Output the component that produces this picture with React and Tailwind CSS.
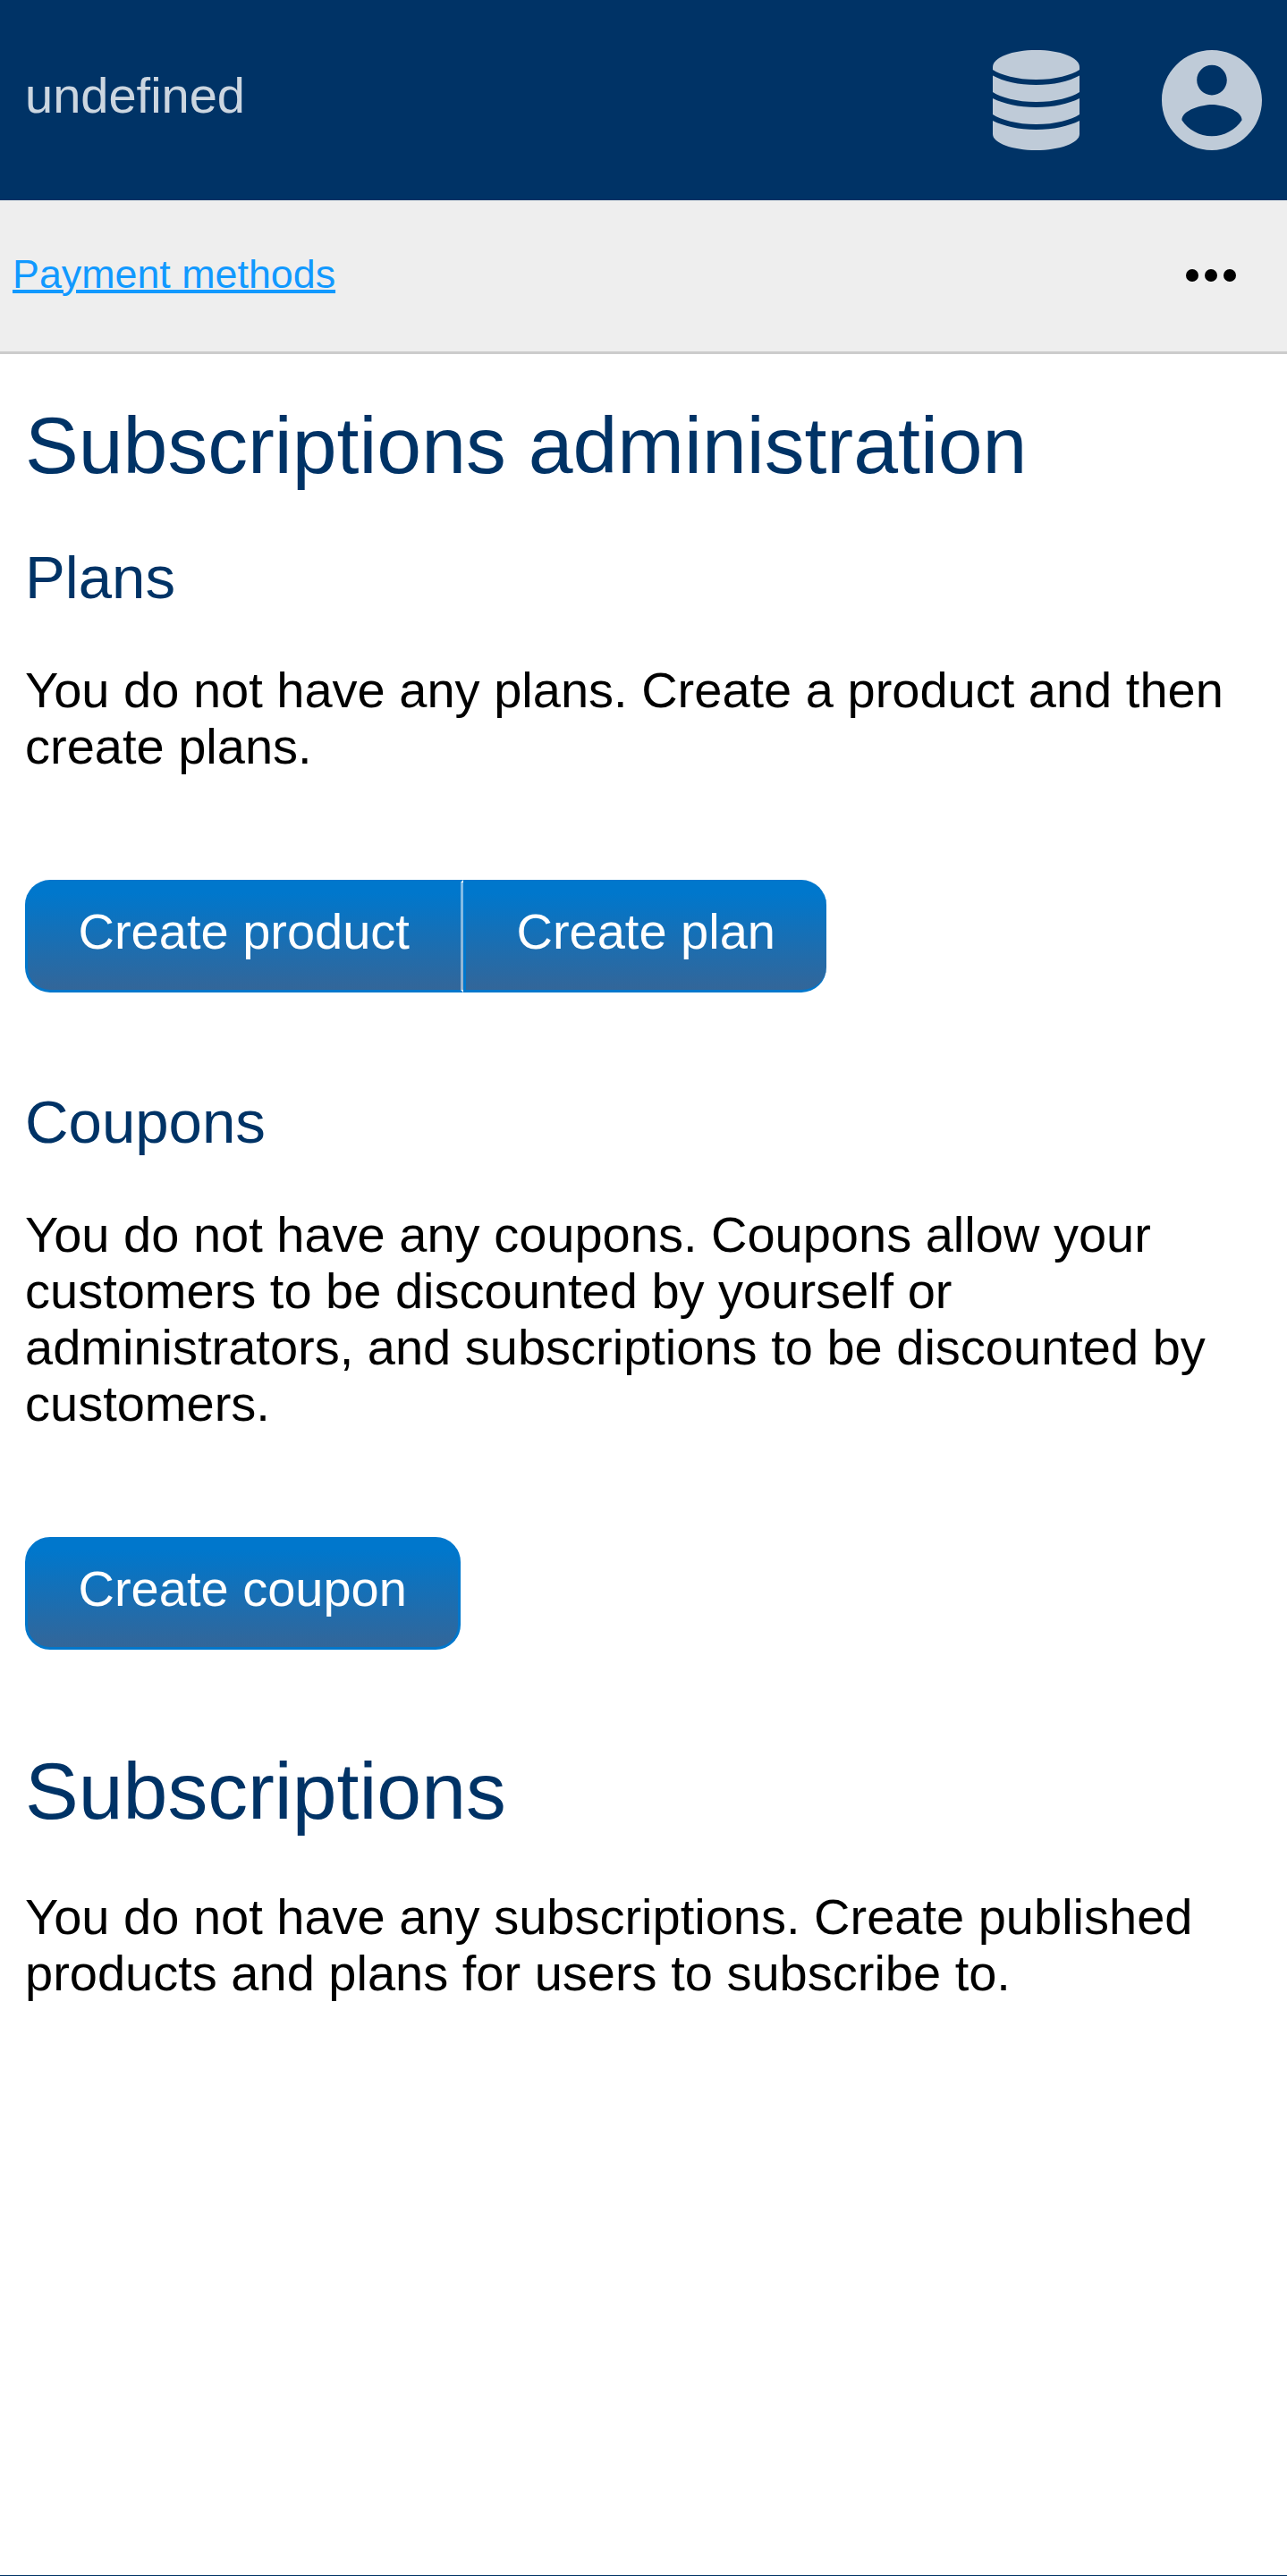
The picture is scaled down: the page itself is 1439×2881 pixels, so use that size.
const P = ({ children, className = "" }) => (
  <p className={"text-[56px] leading-[63px] text-black " + className}>{children}</p>
);

const BTN =
  "box-border h-[126px] border-[3px] border-[#0077cc] bg-linear-to-b/srgb from-[#0077cc] from-10% to-[#336699] pl-[56.5px] pt-[23.5px] pb-[33.5px] text-[56px] leading-[63px] text-white whitespace-nowrap";

export default function App() {
  return (
    <div className="flex h-[2881px] w-[1439px] flex-col overflow-hidden bg-white font-['Liberation_Sans',Arial,sans-serif]">
      <header className="flex h-[224px] shrink-0 items-center justify-between bg-[#003366] pl-7 pr-[28.5px]">
        <span className="pb-[11px] text-[56px] leading-[63px] text-white/80">undefined</span>
        <div className="flex items-center gap-[91.5px]">
          <svg viewBox="0 0 97 112" className="h-[112px] w-[97px] fill-white/75">
            <path d="M0 19C0 8 22 0 48.500 0S97 8 97 19V22C88 28 70 33 48.500 33S9 28 0 22Z" />
            <path d="M0 28.500C12 35 29 39 48.500 39S85 35 97 28.500V47C88 53 70 58 48.500 58S9 53 0 47Z" />
            <path d="M0 54C12 60 29 64 48.500 64S85 60 97 54V72C88 78 70 83 48.500 83S9 78 0 72Z" />
            <path d="M0 79C12 85 29 89 48.500 89S85 85 97 79V94C97 104 75 112 48.500 112S0 104 0 94Z" />
          </svg>
          <svg viewBox="2 2 20 20" className="h-[112px] w-[112px] fill-white/75">
            <path d="M12 2C6.480 2 2 6.480 2 12s4.480 10 10 10 10-4.480 10-10S17.520 2 12 2zm0 3c1.660 0 3 1.340 3 3s-1.340 3-3 3-3-1.340-3-3 1.340-3 3-3zm0 14.200c-2.500 0-4.710-1.280-6-3.220.03-1.990 4-3.080 6-3.080 1.990 0 5.970 1.090 6 3.080-1.290 1.940-3.500 3.220-6 3.220z" />
          </svg>
        </div>
      </header>
      <nav className="flex h-[171.5px] shrink-0 items-center justify-between border-b-[3px] border-[#cccccc] bg-[#eeeeee] pl-[14px] pr-[57px]">
        <a className="pb-[5px] text-[44.8px] leading-[52px] text-[#1199ff] underline decoration-[4px]">
          Payment methods
        </a>
        <svg viewBox="0 0 56 14" className="h-[14px] w-[56px]">
          <circle cx="7" cy="7" r="7" />
          <circle cx="28" cy="7" r="7" />
          <circle cx="49" cy="7" r="7" />
        </svg>
      </nav>
      <main className="flex grow flex-col items-start px-7">
        <h1 className="mt-[52.5px] text-[89.6px] leading-[100px] text-[#003366]">Subscriptions administration</h1>
        <h2 className="mt-[60px] text-[67.2px] leading-[75px] text-[#003366]">Plans</h2>
        <P className="mt-[57px]">You do not have any plans. Create a product and then create plans.</P>
        <div className="mt-[117.5px] flex">
          <button className={BTN + " rounded-l-[28px] border-r-white/50 pr-[57px]"}>Create product</button>
          <button className={BTN + " rounded-r-[28px] border-r-0 pr-[57.5px]"}>Create plan</button>
        </div>
        <h2 className="mt-[107.5px] text-[67.2px] leading-[75px] text-[#003366]">Coupons</h2>
        <P className="mt-[57px]">
          You do not have any coupons. Coupons allow your customers to be discounted by yourself or administrators, and
          subscriptions to be discounted by customers.
        </P>
        <button className={BTN + " mt-[117.5px] rounded-[28px] pr-[57px]"}>Create coupon</button>
        <h1 className="mt-[108.5px] text-[89.6px] leading-[100px] text-[#003366]">Subscriptions</h1>
        <P className="mt-[59px]">
          You do not have any subscriptions. Create published products and plans for users to subscribe to.
        </P>
      </main>
      <div className="h-px shrink-0 bg-[#003366]" />
    </div>
  );
}
